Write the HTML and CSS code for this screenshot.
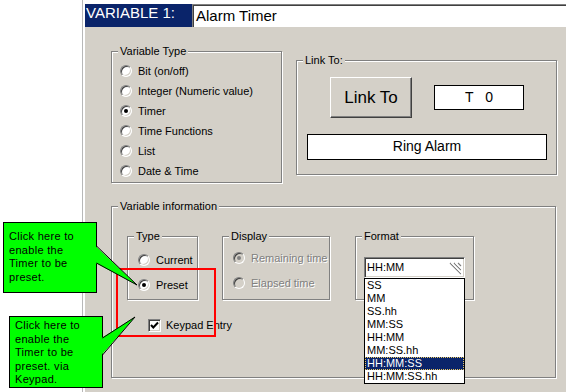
FILE: index.html
```html
<!DOCTYPE html>
<html>
<head>
    <title>Variable 1 - Alarm Timer</title>
    <link rel="stylesheet" href="styles.css">
</head>
<body>
    <div class="page">
        <div class="dialog">
            <div class="titlebar">
                <div class="var-label">VARIABLE 1:</div>
                <div class="var-name">Alarm Timer</div>
            </div>

            <div class="panel">
                <div class="top-row">
                    <div class="group type-group">
                        <span class="legend">Variable Type</span>
                        <div class="radio-row"><span class="radio"></span>Bit (on/off)</div>
                        <div class="radio-row"><span class="radio"></span>Integer (Numeric value)</div>
                        <div class="radio-row"><span class="radio checked"></span>Timer</div>
                        <div class="radio-row"><span class="radio"></span>Time Functions</div>
                        <div class="radio-row"><span class="radio"></span>List</div>
                        <div class="radio-row"><span class="radio"></span>Date &amp; Time</div>
                    </div>

                    <div class="group link-group">
                        <span class="legend">Link To:</span>
                        <div class="link-row">
                            <button class="link-button">Link To</button>
                            <div class="value-box tag-box">T&nbsp;&nbsp;&nbsp;0</div>
                        </div>
                        <div class="value-box name-box">Ring Alarm</div>
                    </div>
                </div>

                <div class="group info-group">
                    <span class="legend">Variable information</span>
                    <div class="sub-row">
                        <div class="group sub-group mode-group">
                            <span class="legend">Type</span>
                            <div class="radio-row"><span class="radio"></span>Current</div>
                            <div class="radio-row"><span class="radio checked"></span>Preset</div>
                        </div>

                        <div class="group sub-group display-group">
                            <span class="legend">Display</span>
                            <div class="radio-row disabled"><span class="radio checked"></span>Remaining time</div>
                            <div class="radio-row disabled"><span class="radio"></span>Elapsed time</div>
                        </div>

                        <div class="group sub-group format-group">
                            <span class="legend">Format</span>
                            <div class="combo">
                                HH:MM
                                <svg class="grip" width="16" height="16" viewBox="0 0 16 16">
                                    <path d="M3 3 L14 14 M7 3 L14 10 M11 3 L14 6" stroke="#808080" stroke-width="1.2" fill="none"/>
                                    <path d="M4 3 L15 14 M8 3 L15 10" stroke="#ffffff" stroke-width="0.8" fill="none"/>
                                </svg>
                            </div>
                            <ul class="dropdown">
                                <li>SS</li>
                                <li>MM</li>
                                <li>SS.hh</li>
                                <li>MM:SS</li>
                                <li>HH:MM</li>
                                <li>MM:SS.hh</li>
                                <li class="selected">HH:MM:SS</li>
                                <li>HH:MM:SS.hh</li>
                            </ul>
                        </div>
                    </div>

                    <div class="check-row">
                        <span class="checkbox">
                            <svg width="11" height="11" viewBox="0 0 11 11">
                                <path d="M2 5 L4.3 7.5 L9 2.5" stroke="#000" stroke-width="2" fill="none"/>
                            </svg>
                        </span>
                        Keypad Entry
                    </div>
                </div>
            </div>
        </div>

        <!-- annotation overlays -->
        <div class="highlight"></div>
        <div class="callout callout-preset">Click here to<br>enable the<br>Timer to be<br>preset.</div>
        <div class="callout callout-keypad">Click here to<br>enable the<br>Timer to be<br>preset. via<br>Keypad.</div>
        <svg class="tails" width="566" height="392">
            <polygon points="95.5,246 137,285 95.5,263" fill="#00ff00"/>
            <polyline points="96.5,246 137,285 96.5,263" fill="none" stroke="#000" stroke-width="1"/>
            <polygon points="101.5,338 135,317 101.5,355" fill="#00ff00"/>
            <polyline points="102.5,338 135,317 102.5,355" fill="none" stroke="#000" stroke-width="1"/>
        </svg>
    </div>
</body>
</html>
```

FILE: styles.css
```css
body {
    margin: 0;
    background-color: #fff;
    font-family: 'Liberation Sans', Arial, sans-serif;
    font-size: 11px;
    color: #000;
}

.page {
    position: relative;
    width: 566px;
    height: 392px;
    overflow: hidden;
}

.dialog {
    margin-left: 82px;
    height: 392px;
    border-left: 1px solid #b8b8b8;
    padding-left: 2px;
    display: flex;
    flex-direction: column;
}

.titlebar {
    margin-top: 4px;
    height: 23px;
    display: flex;
    font-size: 15px;
}

.var-label {
    width: 106px;
    background-color: #0a246a;
    color: #fff;
    padding-left: 1px;
    line-height: 18px;
}

.var-name {
    flex: 1;
    background-color: #fff;
    border-top: 1px solid #808080;
    border-left: 1px solid #808080;
    box-shadow: inset 1px 1px #404040;
    padding: 2px 0 0 3px;
    line-height: 18px;
}

.panel {
    flex: 1;
    background-color: #d4d0c8;
    padding: 24px 0 0 26px;
}

/* etched group boxes */
.group {
    position: relative;
    box-sizing: border-box;
    border: 1px solid #808080;
    box-shadow: 1px 1px 0 #fff, inset 1px 1px 0 #fff;
}

.legend {
    position: absolute;
    top: -7px;
    left: 6px;
    padding: 0 2px;
    line-height: 13px;
    background-color: #d4d0c8;
    white-space: nowrap;
}

.top-row {
    display: flex;
    align-items: flex-start;
    gap: 14px;
}

.type-group {
    width: 171px;
    height: 132px;
    padding: 9px 0 0 8px;
}

.radio-row {
    display: flex;
    align-items: center;
    gap: 6px;
    height: 20px;
    white-space: nowrap;
}

.radio {
    position: relative;
    box-sizing: border-box;
    width: 12px;
    height: 12px;
    border-radius: 50%;
    background-color: #fff;
    border: 1px solid;
    border-color: #808080 #fff #fff #808080;
    box-shadow: inset 1px 1px #404040, inset -1px -1px #d4d0c8;
    flex-shrink: 0;
}

.radio.checked::after {
    content: "";
    position: absolute;
    left: 3px;
    top: 3px;
    width: 4px;
    height: 4px;
    border-radius: 50%;
    background-color: #000;
}

.disabled {
    color: #808080;
    text-shadow: 1px 1px #fff;
}

.disabled .radio {
    background-color: #d4d0c8;
}

.disabled .radio.checked::after {
    background-color: #808080;
}

.link-group {
    margin-top: 9px;
    width: 261px;
    height: 115px;
    padding: 16px 0 0 10px;
}

.link-row {
    display: flex;
    align-items: center;
    margin-left: 23px;
}

.link-button {
    box-sizing: border-box;
    width: 82px;
    height: 41px;
    background-color: #d4d0c8;
    border: 1px solid;
    border-color: #fff #404040 #404040 #fff;
    box-shadow: inset -1px -1px #808080;
    font-family: 'Liberation Sans', Arial, sans-serif;
    font-size: 17px;
    color: #000;
    padding: 0;
}

.value-box {
    box-sizing: border-box;
    border: 1px solid #000;
    background-color: #fff;
    font-size: 14px;
    text-align: center;
}

.tag-box {
    margin-left: 22px;
    width: 90px;
    height: 25px;
    line-height: 22px;
}

.name-box {
    margin-top: 16px;
    width: 240px;
    height: 26px;
    line-height: 23px;
}

.info-group {
    margin-top: 23px;
    width: 445px;
    height: 172px;
    padding: 29px 0 0 15px;
}

.sub-row {
    display: flex;
    align-items: flex-start;
    gap: 24px;
}

.sub-group {
    height: 64px;
}

.mode-group {
    width: 71px;
    padding: 13px 0 0 10px;
}

.mode-group .radio-row + .radio-row {
    margin-top: 5px;
}

.display-group {
    width: 108px;
    padding: 11px 0 0 10px;
}

.display-group .radio-row + .radio-row {
    margin-top: 5px;
}

.format-group {
    width: 119px;
    margin-left: 1px;
    padding: 20px 0 0 8px;
}

.combo {
    position: relative;
    box-sizing: border-box;
    width: 101px;
    height: 21px;
    background-color: #fff;
    border: 1px solid;
    border-color: #808080 #fff #fff #808080;
    box-shadow: inset 1px 1px #404040, inset -1px -1px #d4d0c8;
    padding-left: 2px;
    line-height: 19px;
}

.grip {
    position: absolute;
    right: 1px;
    bottom: 1px;
}

.dropdown {
    position: absolute;
    left: 8px;
    top: 41px;
    z-index: 2;
    box-sizing: border-box;
    width: 101px;
    margin: 0;
    padding: 0;
    list-style: none;
    background-color: #fff;
    border: 1px solid #000;
}

.dropdown li {
    height: 13px;
    line-height: 13px;
    padding-left: 2px;
}

.dropdown .selected {
    background-color: #0a246a;
    color: #fff;
    outline: 1px dotted #e8c860;
    outline-offset: -1px;
}

.check-row {
    display: flex;
    align-items: center;
    gap: 5px;
    margin: 19px 0 0 21px;
    line-height: 13px;
}

.checkbox {
    box-sizing: border-box;
    width: 13px;
    height: 13px;
    background-color: #fff;
    border: 1px solid;
    border-color: #808080 #fff #fff #808080;
    box-shadow: inset 1px 1px #404040, inset -1px -1px #d4d0c8;
    display: flex;
    align-items: center;
    justify-content: center;
}

/* annotations */
.highlight {
    position: absolute;
    left: 116px;
    top: 268px;
    width: 100px;
    height: 69px;
    box-sizing: border-box;
    border: 2px solid #ff0000;
}

.callout {
    position: absolute;
    box-sizing: border-box;
    width: 94px;
    background-color: #00ff00;
    border: 1px solid #000;
    padding-left: 5px;
    line-height: 13.5px;
    letter-spacing: 0.3px;
    z-index: 3;
}

.callout-preset {
    left: 3px;
    top: 222px;
    height: 71px;
    padding-top: 7px;
}

.callout-keypad {
    left: 9px;
    top: 316px;
    height: 72px;
    padding-top: 2px;
}

.tails {
    position: absolute;
    left: 0;
    top: 0;
    z-index: 4;
    pointer-events: none;
}
```
